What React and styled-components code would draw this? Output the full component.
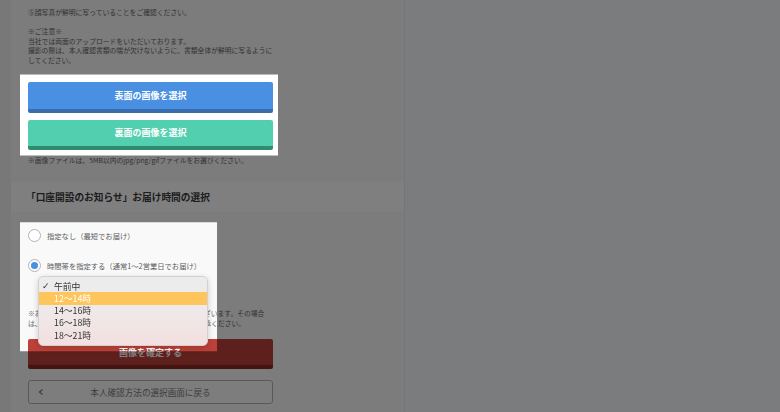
import { useLayoutEffect, useRef, useState } from "react";
import styled, { createGlobalStyle } from "styled-components";

const GlobalStyle = createGlobalStyle`
  html, body { margin: 0; padding: 0; }
  body {
    width: 780px;
    height: 412px;
    overflow: hidden;
    background: #f6f8fc;
    font-family: "Noto Sans CJK JP", "Noto Sans", sans-serif;
    color: #6b6b6b;
  }
`;

const Page = styled.div`
  display: flex;
  height: 412px;
`;

const Gutter = styled.div`
  width: 11px;
  background: #f0f0f0;
`;

const Panel = styled.main`
  width: 393px;
  background: #f9f9f9;
  border-right: 1px solid #ececec;
`;

const Section = styled.div`
  width: 245px;
  padding: ${(p) => p.$pad || "0"};
  margin-left: 17px;
`;

const Note = styled.p`
  margin: ${(p) => p.$margin || "0"};
  font-size: 6.8px;
  line-height: 9.6px;
  white-space: nowrap;
  color: #666;
`;

const UploadBox = styled.div`
  display: flex;
  flex-direction: column;
  gap: 7px;
  margin: 9px -5px 0 -8px;
  padding: 7px 5px 6px 8px;
  background: #fff;
`;

const ActionButton = styled.button`
  height: ${(p) => p.$h || 30}px;
  width: 100%;
  border: 0;
  border-bottom: 4px solid ${(p) => p.$shade};
  border-radius: 2px;
  background: ${(p) => p.$color};
  color: #fff;
  font-family: inherit;
  font-size: 9px;
  font-weight: 700;
  padding: 0;
  margin-top: ${(p) => p.$mt || 0}px;
`;

const Band = styled.div`
  margin-top: 17px;
  height: 30px;
  background: #fff;
  display: flex;
  align-items: center;
  padding-left: 15px;
  font-size: 9.7px;
  font-weight: 700;
  color: #3a3a3a;
`;

const RadioGroup = styled.div`
  display: flex;
  flex-direction: column;
  gap: 17px;
`;

const RadioRow = styled.label`
  display: flex;
  align-items: center;
  gap: 6px;
  height: 13px;
  font-size: 7.3px;
  color: #5e5e5e;
`;

const RadioMark = styled.span`
  box-sizing: border-box;
  width: 13px;
  height: 13px;
  border-radius: 50%;
  border: 1px solid #b3b3b3;
  background: #fff;
  display: flex;
  align-items: center;
  justify-content: center;
  &::after {
    content: "";
    width: 7px;
    height: 7px;
    border-radius: 50%;
    background: ${(p) => (p.$on ? "#4a90e2" : "transparent")};
  }
`;

const SelectWrap = styled.div`
  position: relative;
  margin: 7px 0 0 10px;
  width: 160px;
`;

const SelectBox = styled.div`
  height: 14px;
  border: 1px solid #ccc;
  border-radius: 3px;
  background: #fff;
  font-size: 8px;
  line-height: 14px;
  padding-left: 14px;
  color: #333;
`;

const Menu = styled.ul`
  position: absolute;
  z-index: 20;
  top: -3px;
  left: 0;
  width: 170px;
  margin: 0;
  padding: 3px 0 4px;
  list-style: none;
  box-sizing: border-box;
  border: 1px solid #d4d0d0;
  border-radius: 5px;
  background: linear-gradient(#ececec, #efe9e9 50%, #f3dfdf);
  box-shadow: 0 2px 6px rgba(0, 0, 0, 0.18);
`;

const MenuItem = styled.li`
  height: 12.2px;
  display: flex;
  align-items: center;
  font-size: 8.8px;
  color: ${(p) => (p.$active ? "#fff" : "#333")};
  background: ${(p) => (p.$active ? "#fec55c" : "transparent")};
`;

const Check = styled.span`
  width: 15px;
  padding-left: 3px;
  box-sizing: border-box;
  font-size: 9px;
  font-weight: 700;
  font-family: "DejaVu Sans", sans-serif;
`;

const BackButton = styled.button`
  display: grid;
  grid-template-columns: 24px 1fr 24px;
  align-items: center;
  width: 100%;
  height: 24px;
  margin-top: 11px;
  padding: 0;
  border: 1px solid #b3b3b3;
  border-radius: 3px;
  background: #fafafa;
  font-family: inherit;
  font-size: 8.6px;
  color: #7c7c7c;
`;

const Dim = styled.div`
  position: fixed;
  inset: 0;
  z-index: 10;
  background: rgba(0, 0, 0, 0.5);
`;

const times = ["午前中", "12〜14時", "14〜16時", "16〜18時", "18〜21時"];

export default function App() {
  const uploadRef = useRef(null);
  const radioRef = useRef(null);
  const [holes, setHoles] = useState([]);

  useLayoutEffect(() => {
    const a = uploadRef.current.getBoundingClientRect();
    const b = radioRef.current.getBoundingClientRect();
    setHoles([
      { x: a.left, y: a.top, w: a.width, h: a.height },
      { x: b.left - 8, y: b.top - 7, w: 197, h: 129 },
    ]);
  }, []);

  const d =
    `M0 0H${window.innerWidth}V${window.innerHeight}H0Z` +
    holes.map((h) => `M${h.x} ${h.y}h${h.w}v${h.h}h${-h.w}Z`).join("");

  return (
    <>
      <GlobalStyle />
      <Page>
        <Gutter />
        <Panel>
          <Section $pad="8px 0 0">
            <Note>⑤顔写真が鮮明に写っていることをご確認ください。</Note>
            <Note $margin="9.6px 0 0">※ご注意※</Note>
            <Note>当社では両面のアップロードをいただいております。</Note>
            <Note>撮影の際は、本人確認書類の端が欠けないように、書類全体が鮮明に写るように</Note>
            <Note>してください。</Note>
            <UploadBox ref={uploadRef}>
              <ActionButton $color="#4a90e2" $shade="#3a6db0" $h={31}>
                表面の画像を選択
              </ActionButton>
              <ActionButton $color="#52cfae" $shade="#2f8c70">
                裏面の画像を選択
              </ActionButton>
            </UploadBox>
            <Note>※画像ファイルは、5MB以内のjpg/png/gifファイルをお選びください。</Note>
          </Section>

          <Band>「口座開設のお知らせ」お届け時間の選択</Band>

          <Section $pad="17px 0 0">
            <div ref={radioRef}>
              <RadioGroup>
                <RadioRow>
                  <RadioMark />
                  指定なし（最短でお届け）
                </RadioRow>
                <RadioRow>
                  <RadioMark $on />
                  時間帯を指定する（通常1〜2営業日でお届け）
                </RadioRow>
              </RadioGroup>
              <SelectWrap>
                <SelectBox>午前中</SelectBox>
                <Menu>
                  {times.map((t, i) => (
                    <MenuItem key={t} $active={i === 1}>
                      <Check>{i === 0 ? "✓" : ""}</Check>
                      {t}
                    </MenuItem>
                  ))}
                </Menu>
              </SelectWrap>
            </div>
            <Note $margin="14px 0 0">
              ※お届け時間は目安です。配送状況により遅れる場合がございます。その場合
              <br />
              は、翌日以降のお届けとなる場合がございますので、ご了承ください。
            </Note>
            <ActionButton $color="#bd4139" $shade="#862824" $mt={11}>
              画像を確定する
            </ActionButton>
            <BackButton>
              <svg width="24" height="8" viewBox="0 0 24 8">
                <path d="M13.5 1.5 10.5 4l3 2.5" fill="none" stroke="#7c7c7c" strokeWidth="1.2" />
              </svg>
              本人確認方法の選択画面に戻る
              <span />
            </BackButton>
          </Section>
        </Panel>
      </Page>
      <Dim style={{ clipPath: `path(evenodd, "${d}")` }} />
    </>
  );
}
